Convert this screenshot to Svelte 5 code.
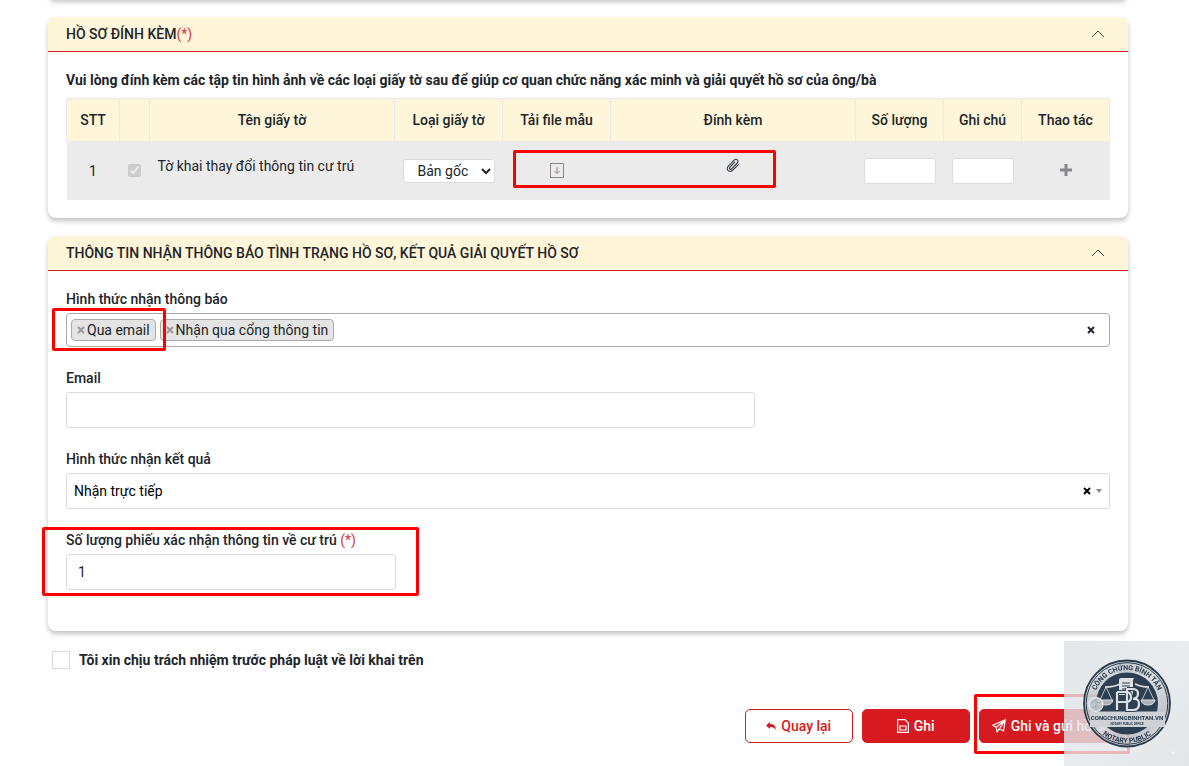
<script>
  let previousOpen = true;
  let docType = 'Bản gốc';
  let email = '';
  let resultMode = 'Nhận trực tiếp';
  let copies = '1';
  let agreed = false;
  let channels = [
    { name: 'Qua email', marked: true },
    { name: 'Nhận qua cổng thông tin', marked: false }
  ];

  function removeChannel(name) {
    channels = channels.filter((c) => c.name !== name);
  }
</script>

{#snippet cross()}
  <svg class="cross" viewBox="0 0 8 8" aria-hidden="true"><path d="M1 1l6 6M7 1L1 7" /></svg>
{/snippet}

{#snippet chevron()}
  <svg class="chevron" viewBox="0 0 14 8" aria-hidden="true"><path d="M1 7l6-6 6 6" /></svg>
{/snippet}

<main>
  {#if previousOpen}
    <div class="card previous"></div>
  {/if}

  <section class="card">
    <header>
      <h2>HỒ SƠ ĐÍNH KÈM<span class="req">(*)</span></h2>
      <button class="plain" aria-label="Thu gọn">{@render chevron()}</button>
    </header>
    <div class="body files">
      <p class="note">Vui lòng đính kèm các tập tin hình ảnh về các loại giấy tờ sau để giúp cơ quan chức năng xác minh và giải quyết hồ sơ của ông/bà</p>
      <table>
        <colgroup>
          <col class="c-no" /><col class="c-check" /><col /><col class="c-type" /><col class="c-type" /><col />
          <col class="c-side" /><col class="c-note" /><col class="c-side" />
        </colgroup>
        <thead>
          <tr>
            <th>STT</th><th></th><th>Tên giấy tờ</th><th>Loại giấy tờ</th><th>Tải file mẫu</th><th>Đính kèm</th>
            <th>Số lượng</th><th>Ghi chú</th><th>Thao tác</th>
          </tr>
        </thead>
        <tbody>
          <tr>
            <td>1</td>
            <td><input class="tick" type="checkbox" checked disabled aria-label="Chọn giấy tờ" /></td>
            <td class="name">Tờ khai thay đổi thông tin cư trú</td>
            <td>
              <select class="type" bind:value={docType} aria-label="Loại giấy tờ">
                <option>Bản gốc</option><option>Bản sao</option>
              </select>
            </td>
            <td class="download">
              <button class="plain" aria-label="Tải file mẫu">
                <svg width="14" height="15" viewBox="0 0 14 15" fill="none" stroke="#8d8785">
                  <path d="M.5.5h13v14H.5z" /><path d="M7 4v6.500M4.500 8L7 10.500 9.500 8" />
                </svg>
              </button>
              <span class="mark mark-files"></span>
            </td>
            <td class="attach">
              <button class="plain" aria-label="Đính kèm">
                <svg width="14" height="15" viewBox="0 0 14 15" fill="none" stroke="#333a42" stroke-width="1.100" stroke-linecap="round">
                  <path d="M12.300 6.600l-5.500 5.600c-1.200 1.300-3.300 1.500-4.600.4s-1.300-3-.1-4.300l6-6.200c.9-.9 2.300-1 3.200-.2s.9 2.200 0 3.100l-5.700 5.900c-.5.500-1.300.6-1.800.1s-.5-1.200 0-1.700l4.900-5.100" />
                </svg>
              </button>
            </td>
            <td><input class="small" type="text" aria-label="Số lượng" /></td>
            <td><input class="small" type="text" aria-label="Ghi chú" /></td>
            <td class="add">
              <button class="plain" aria-label="Thêm">
                <svg width="12" height="12" viewBox="0 0 12 12" stroke="#85878b" stroke-width="3"><path d="M6 0v12M0 6h12" /></svg>
              </button>
            </td>
          </tr>
        </tbody>
      </table>
    </div>
  </section>

  <section class="card">
    <header>
      <h2>THÔNG TIN NHẬN THÔNG BÁO TÌNH TRẠNG HỒ SƠ, KẾT QUẢ GIẢI QUYẾT HỒ SƠ</h2>
      <button class="plain" aria-label="Thu gọn">{@render chevron()}</button>
    </header>
    <div class="body form">
      <div class="field">
        <label for="channels">Hình thức nhận thông báo</label>
        <div class="multi">
          {#each channels as c (c.name)}
            <span class="chip">
              <button class="plain" aria-label={'Xóa ' + c.name} on:click={() => removeChannel(c.name)}>{@render cross()}</button>
              {c.name}
              {#if c.marked}<span class="mark mark-chip"></span>{/if}
            </span>
          {/each}
          <input id="channels" type="text" />
          <button class="plain clear" aria-label="Xóa tất cả" on:click={() => (channels = [])}>{@render cross()}</button>
        </div>
      </div>
      <div class="field wide">
        <label for="email">Email</label>
        <input id="email" class="box" type="text" bind:value={email} />
      </div>
      <div class="field">
        <label for="result">Hình thức nhận kết quả</label>
        <div class="single">
          <select id="result" bind:value={resultMode}>
            <option>Nhận trực tiếp</option><option>Nhận qua bưu điện</option>
          </select>
          <button class="plain" aria-label="Xóa">{@render cross()}</button>
          <span class="caret"></span>
        </div>
      </div>
      <div class="field narrow">
        <label for="copies">Số lượng phiếu xác nhận thông tin về cư trú <span class="req">(*)</span></label>
        <input id="copies" class="box" type="text" bind:value={copies} />
        <span class="mark mark-field"></span>
      </div>
    </div>
  </section>

  <label class="agree">
    <input type="checkbox" bind:checked={agreed} />
    Tôi xin chịu trách nhiệm trước pháp luật về lời khai trên
  </label>

  <div class="actions">
    <button class="btn outline">
      <svg width="10" height="8" viewBox="0 0 10 8" fill="currentColor"><path d="M4 0v2c3.500 0 6 1.500 5.600 6C8.800 6 7 5 4 5.100V7L0 3.500z" /></svg>
      Quay lại
    </button>
    <button class="btn">
      <svg width="12" height="14" viewBox="0 0 12 14" fill="none" stroke="currentColor" stroke-width="1.200"><path d="M.6.6h7.400l3.400 3.400v9.400H.6zM3 7h6v4H3z" /></svg>
      Ghi
    </button>
    <div class="send">
      <button class="btn fit">
        <svg width="14" height="14" viewBox="0 0 14 14" fill="none" stroke="currentColor" stroke-width="1.200" stroke-linejoin="round"><path d="M13.300.7L.7 6.300l3.600 1.900L13.300.7 11.500 12 7.300 9.800 5 13.200 4.300 8.200M7.300 9.800l6-9.100" /></svg>
        Ghi và gửi hồ sơ
      </button>
      <span class="mark mark-send"></span>
    </div>
  </div>
</main>

<svg class="seal" viewBox="0 0 125 125" role="img" aria-label="Công chứng Bình Tân">
  <defs>
    <linearGradient id="bg" x1="0" y1="0" x2="1" y2="1">
      <stop offset="0" stop-color="#dbe1e4" /><stop offset=".5" stop-color="#e4e7ea" /><stop offset="1" stop-color="#dce1e4" />
    </linearGradient>
    <linearGradient id="silver" x1="0" y1="0" x2="1" y2="1">
      <stop offset="0" stop-color="#eef0f2" /><stop offset=".3" stop-color="#b9bfc4" /><stop offset=".5" stop-color="#d8dbde" /><stop offset=".75" stop-color="#b3b9be" /><stop offset="1" stop-color="#eceef0" />
    </linearGradient>
    <path id="arcTop" d="M29.500 62.500a33.500 33.500 0 0 1 67 0" />
    <path id="arcBottom" d="M23.500 62.500a39.500 39.500 0 0 0 79 0" />
  </defs>
  <rect width="125" height="125" fill="url(#bg)" opacity=".8" />
  <circle cx="63" cy="62.500" r="43" fill="url(#silver)" fill-opacity=".7" stroke="#293a4b" stroke-width="1.800" />
  <circle cx="63" cy="62.500" r="40.800" fill="none" stroke="#293a4b" stroke-width="1" />
  <circle cx="63" cy="62.500" r="31" fill="#2d4052" />
  <path d="M26 70.500h75V86H26z" fill="#ced2d6" />
  <g fill="none" stroke="#dce0e3">
    <path stroke-width="1.500" d="M41 46q10 0 15-3M71 43q6 3 14 3" />
    <path stroke-width=".8" d="M42 46l-6 13M42 46l6 13M84 46l-6 13M84 46l6 13" />
    <path d="M35 59h14q-1 5-7 5t-7-5zM77 59h14q-1 5-7 5t-7-5z" fill="#aab2b9" />
  </g>
  <path d="M55 39q0-2 2-2h14q-2 0-2 3v14H55z" fill="#dfe2e4" />
  <path d="M58 42h8M58 45h8M58 48h8" stroke="#2d4052" stroke-width="1.200" />
  <g fill="none" stroke="#2d4052" stroke-width="4">
    <path d="M53 51v18M53 51h9q5 0 5 5t-5 5h-9M63 47v22h6q6 0 6-6t-6-5q5-1 5-5.500T68 48h-5" />
  </g>
  <g fill="none" stroke="#dce0e3" stroke-width="2.200">
    <path d="M53 51v18M53 51h9q5 0 5 5t-5 5h-9M63 47v22h6q6 0 6-6t-6-5q5-1 5-5.500T68 48h-5" />
  </g>
  <circle cx="32" cy="63.500" r="7" fill="#c2c7ca" stroke="#eceff0" stroke-width="1.200" />
  <path d="M27 63l4-4 3 3 3-1M28 67l4-2 4 2M32 58v11" fill="none" stroke="#9aa2a8" stroke-width=".8" />
  <path d="M109 109l.7 1.800 1.800.7-1.800.7-.7 1.800-.7-1.800-1.800-.7 1.800-.7z" fill="#f2f4f5" />
  <g fill="#26384a" class="seal-text">
    <text font-size="7"><textPath href="#arcTop" startOffset="50%">CÔNG CHỨNG BÌNH TÂN</textPath></text>
    <text font-size="7"><textPath href="#arcBottom" startOffset="50%">NOTARY PUBLIC</textPath></text>
    <text x="63" y="79" font-size="6">CONGCHUNGBINHTAN.VN</text>
    <text x="63" y="84" font-size="3">NOTARY PUBLIC OFFICE</text>
  </g>
</svg>

<style>
  :global(body) {
    background: #fff;
    color: #212529;
    font: 14px/20px Roboto, sans-serif;
  }
  main,
  main :global(*) {
    box-sizing: border-box;
  }
  main {
    padding: 0 61px 23px 48px;
    display: flex;
    flex-direction: column;
    gap: 18px;
  }
  .card {
    border-radius: 8px;
    background: #fff;
    box-shadow: 0 3px 5px rgba(0, 0, 0, 0.24);
  }
  .previous {
    height: 20px;
    margin-top: -21px;
  }
  header {
    display: flex;
    align-items: center;
    justify-content: space-between;
    height: 35px;
    padding: 0 23px 0 18px;
    background: #fff6da;
    border-bottom: 1px solid #d71920;
    border-radius: 8px 8px 0 0;
  }
  h2 {
    margin: 0;
    font-size: 14px;
    font-weight: 500;
  }
  .req {
    color: #d9363c;
    font-weight: 400;
  }
  button,
  input,
  select {
    font: inherit;
    color: inherit;
  }
  .plain {
    display: inline-flex;
    padding: 0;
    border: 0;
    background: none;
    cursor: pointer;
  }
  .chevron {
    width: 14px;
    height: 8px;
    fill: none;
    stroke: #3c4646;
  }
  .cross {
    width: 8px;
    height: 8px;
    fill: none;
    stroke: currentColor;
    stroke-width: 2;
  }
  .body {
    padding: 18px;
  }
  .note {
    margin: 0 0 8px;
    font-weight: 700;
  }
  table {
    width: 100%;
    table-layout: fixed;
    border-collapse: collapse;
    text-align: center;
  }
  .c-no { width: 53px; }
  .c-check { width: 30px; }
  .c-type { width: 108px; }
  .c-side { width: 88px; }
  .c-note { width: 78px; }
  th {
    height: 43px;
    padding: 0;
    border: 1px solid #e9e9ee;
    background: #fff6da;
    font-weight: 500;
  }
  td {
    height: 58px;
    padding: 0 8px;
    background: #ebebeb;
    vertical-align: middle;
  }
  td .plain {
    vertical-align: middle;
  }
  .tick {
    display: block;
    width: 13px;
    height: 13px;
    margin: 0;
  }
  .name {
    padding-top: 14px;
    text-align: left;
    vertical-align: top;
  }
  .attach {
    padding-bottom: 14px;
  }
  .download {
    position: relative;
  }
  .download,
  .add {
    padding-bottom: 4px;
  }
  .type {
    display: block;
    width: 100%;
    height: 24px;
    padding: 0 0 0 10px;
    border: 1px solid #dcdcdc;
    border-radius: 3px;
    background: #fff;
  }
  .small {
    display: block;
    width: 100%;
    height: 26px;
    border: 1px solid #dcdcdc;
    border-radius: 3px;
    background: #fff;
  }
  .form {
    display: flex;
    flex-direction: column;
    gap: 21px;
    padding-bottom: 41px;
  }
  .field {
    position: relative;
    display: flex;
    flex-direction: column;
    gap: 4px;
  }
  .field > label {
    font-weight: 500;
  }
  .wide {
    width: 66%;
  }
  .narrow {
    width: 330px;
  }
  .box {
    height: 36px;
    padding: 0 11px;
    border: 1px solid #dcdcdc;
    border-radius: 3px;
  }
  .multi {
    display: flex;
    align-items: center;
    gap: 4px;
    height: 34px;
    padding: 0 14px 0 4px;
    border: 1px solid #aaa;
    border-radius: 4px;
  }
  .multi > input {
    flex: 1;
    min-width: 0;
    border: 0;
    outline: 0;
  }
  .chip {
    position: relative;
    display: flex;
    align-items: center;
    gap: 2px;
    height: 22px;
    padding: 0 5px;
    border: 1px solid #aaa;
    border-radius: 4px;
    background: #e4e4e4;
  }
  .chip .plain {
    color: #999;
  }
  .single {
    display: flex;
    align-items: center;
    gap: 5px;
    height: 36px;
    padding: 0 7px;
    border: 1px solid #dcdcdc;
    border-radius: 3px;
    color: #000;
  }
  .single select {
    flex: 1;
    appearance: none;
    border: 0;
    padding: 0;
    background: none;
  }
  .caret {
    border: 3px solid transparent;
    border-top: 4px solid #888;
    border-bottom: 0;
  }
  .agree {
    display: flex;
    align-items: center;
    gap: 9px;
    padding: 1px 4px 0;
    font-weight: 700;
  }
  .agree input {
    appearance: none;
    width: 18px;
    height: 18px;
    margin: 0;
    border: 1px solid #d8d8d8;
    background: #fff;
  }
  .actions {
    display: flex;
    justify-content: flex-end;
    gap: 9px;
    padding: 21px 4px 0 0;
  }
  .btn {
    display: flex;
    align-items: center;
    justify-content: center;
    gap: 5px;
    width: 108px;
    height: 34px;
    padding: 0 12px;
    border: 1px solid #d71920;
    border-radius: 5px;
    background: #d71920;
    color: #fff;
    font-weight: 500;
    white-space: nowrap;
    cursor: pointer;
  }
  .outline {
    background: #fff;
    color: #d71920;
  }
  .fit {
    width: auto;
  }
  .send {
    position: relative;
  }
  .mark {
    position: absolute;
    border: 3px solid #f00;
    border-radius: 2px;
    pointer-events: none;
  }
  .mark-files {
    top: 8px;
    left: 10px;
    width: 263px;
    height: 38px;
    z-index: 1;
  }
  .mark-chip {
    inset: -12px -11px -11px -20px;
    z-index: 1;
  }
  .mark-field {
    inset: -3px -23px -6px -24px;
  }
  .mark-send {
    inset: -15px -6px -11px -5px;
  }
  .seal {
    position: fixed;
    right: 0;
    bottom: 0;
    width: 125px;
    height: 125px;
    z-index: 2;
  }
  .seal-text {
    font-family: Roboto, sans-serif;
    font-weight: 700;
    text-anchor: middle;
  }
</style>
